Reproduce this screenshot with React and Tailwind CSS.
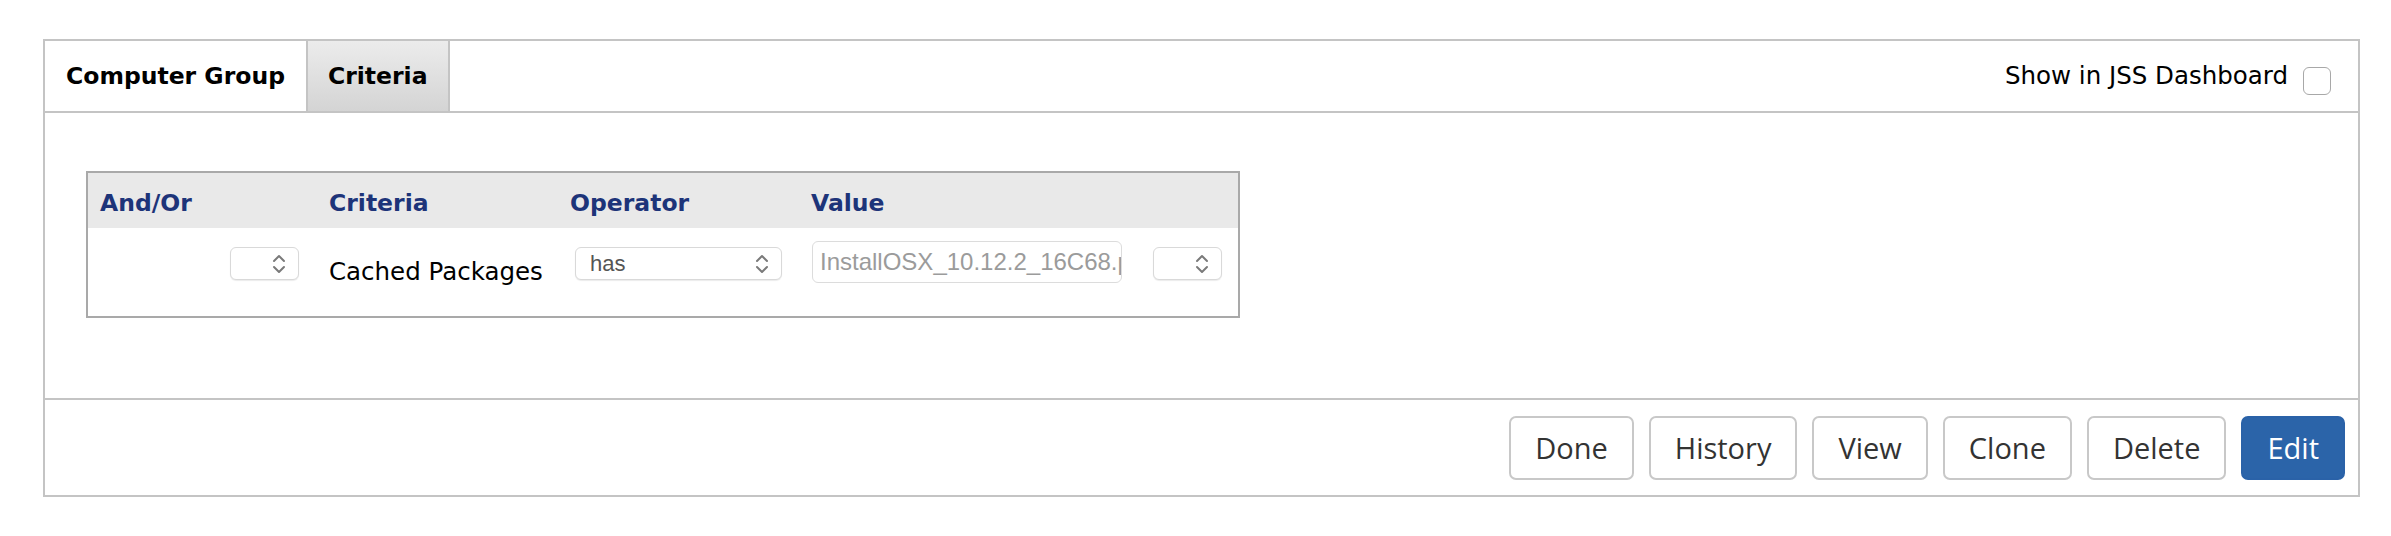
import React from "react";

const lucida = { fontFamily: '"DejaVu Sans", "Liberation Sans", sans-serif' };

function Chevrons() {
  return (
    <svg width="14" height="22" viewBox="0 0 14 22" fill="none" stroke="#7a7a7a" strokeWidth="2" strokeLinecap="round" strokeLinejoin="round">
      <path d="M2 8l5-5 5 5" />
      <path d="M2 14l5 5 5-5" />
    </svg>
  );
}

function Select({ width, label }) {
  return (
    <div
      className="h-[33px] rounded-[6px] border border-[#d9d9d9] bg-white shadow-[0_1px_1px_rgba(0,0,0,0.08)] flex items-center justify-between pl-[14px] pr-[12px]"
      style={{ width }}
    >
      <span className="text-[22px] text-[#555] font-['Liberation_Sans',sans-serif] leading-none">{label}</span>
      <Chevrons />
    </div>
  );
}

const buttons = ["Done", "History", "View", "Clone", "Delete"];

export default function App() {
  return (
    <div className="bg-white w-[2391px] h-[536px] pt-[39px] pl-[43px]" style={lucida}>
      <div className="w-[2317px] border-2 border-[#c4c4c4] flex flex-col">
        {/* tab bar */}
        <div className="h-[72px] flex items-stretch border-b-2 border-[#c4c4c4]">
          <div className="flex items-center px-[21px] border-r-2 border-[#c4c4c4]">
            <span className="text-[23.5px] font-bold text-black leading-[30px]">Computer Group</span>
          </div>
          <div className="flex items-center px-[20px] border-r-2 border-[#c4c4c4] bg-gradient-to-b from-[#ececec] to-[#d4d4d4]">
            <span className="text-[23.5px] font-bold text-black leading-[30px]">Criteria</span>
          </div>
          <div className="flex-1 flex items-center justify-end pr-[27px] gap-[15px]">
            <span className="text-[24.5px] text-black leading-[30px]">Show in JSS Dashboard</span>
            <div className="w-[28px] h-[28px] mt-[9px] rounded-[6px] border border-[#a8a8a8] bg-white" />
          </div>
        </div>

        {/* body */}
        <div className="h-[287px] pt-[58px] pl-[41px] border-b-2 border-[#c4c4c4]">
          <div className="w-[1154px] border-2 border-[#a9a9a9]">
            <div className="h-[55px] bg-[#e9e9e9] grid grid-cols-[229px_241px_241px_342px_1fr] text-[23.5px] font-bold text-[#1d3479] leading-[30px]">
              <div className="pl-3 pt-[15px]">And/Or</div>
              <div className="pl-3 pt-[15px]">Criteria</div>
              <div className="pl-3 pt-[15px]">Operator</div>
              <div className="pl-3 pt-[15px]">Value</div>
              <div />
            </div>
            <div className="h-[88px] bg-white grid grid-cols-[229px_241px_241px_342px_1fr]">
              <div className="flex justify-end pr-[18px] pt-[19px]">
                <Select width={69} label="" />
              </div>
              <div className="pl-3 flex items-center">
                <span className="text-[24.5px] text-black leading-[30px] whitespace-nowrap">Cached Packages</span>
              </div>
              <div className="pl-[17px] pt-[19px]">
                <Select width={207} label="has" />
              </div>
              <div className="pl-[13px] pt-[13px]">
                <div className="w-[310px] h-[42px] rounded-[6px] border border-[#dcdcdc] bg-white overflow-hidden flex items-center pl-[7px]">
                  <span className="text-[24px] text-[#9b9b9b] whitespace-nowrap font-['Liberation_Sans',sans-serif] leading-none">
                    InstallOSX_10.12.2_16C68.pkg
                  </span>
                </div>
              </div>
              <div className="pl-3 pt-[19px]">
                <Select width={69} label="" />
              </div>
            </div>
          </div>
        </div>

        {/* footer */}
        <div className="h-[95px] flex items-center justify-end pr-[13px] gap-[15px] font-['Open_Sans',sans-serif]">
          {buttons.map((b) => (
            <button
              key={b}
              className="h-[64px] px-[24px] rounded-[7px] border-2 border-[#c8c8c8] bg-white text-[29px] text-[#333] leading-none"
            >
              {b}
            </button>
          ))}
          <button className="h-[64px] px-[24px] rounded-[7px] border-2 border-[#2a62a8] bg-[#2b64a9] text-[29px] text-white leading-none">
            Edit
          </button>
        </div>
      </div>
    </div>
  );
}
